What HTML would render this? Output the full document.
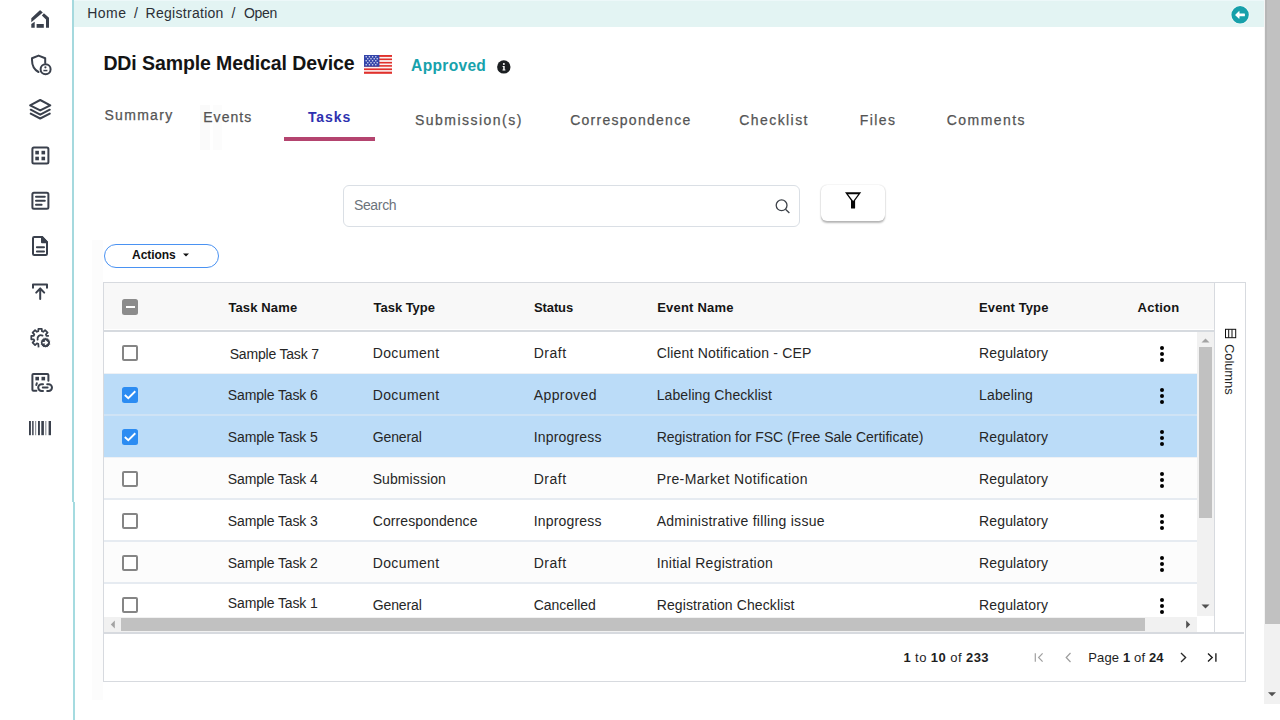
<!DOCTYPE html>
<html><head><meta charset="utf-8">
<style>
html,body{margin:0;padding:0;}
body{width:1280px;height:720px;overflow:hidden;position:relative;background:#fff;font-family:"Liberation Sans",sans-serif;}
.a{position:absolute;}
.t{position:absolute;white-space:nowrap;}
.cb{position:absolute;left:122px;width:12px;height:12px;border:2px solid #858585;border-radius:2px;background:#fff;}
.cbc{position:absolute;left:122px;width:16px;height:16px;border-radius:2.5px;background:#2c8cf2;}
.row{position:absolute;left:104px;width:1093px;height:42px;}
.dots{position:absolute;left:1159.5px;width:4px;height:4px;border-radius:50%;background:#000;box-shadow:0 6px 0 #000,0 12px 0 #000;}
</style></head>
<body>
<!-- sidebar -->
<div class="a" style="left:72px;top:0;width:2px;height:502px;background:#a5d9de"></div><div class="a" style="left:73px;top:502px;width:1.6px;height:218px;background:#a5dbe0"></div>
<div class="a" style="left:92px;top:240px;width:11px;height:460px;background:#fcfcfc"></div>
<svg class="a" style="left:0;top:0" width="72" height="460" viewBox="0 0 72 460" fill="none" stroke="#3a404c" stroke-width="2" stroke-linecap="round" stroke-linejoin="round">
  <!-- home -->
  <g fill="#3a404c" stroke="none">
    <path d="M31.3 18.3 L39.6 10.6 Q40.1 10.1 40.6 10.6 L42.8 12.5 L31.3 22.2 Z"/>
    <path d="M43.9 13.3 L49 17.7 L49 27.7 L46 27.7 L46 19.5 L41.9 15.5 Z"/>
    <path d="M31.3 24.1 L34.7 21.7 L34.7 27.7 L31.3 27.7 Z"/>
    <rect x="36.6" y="24" width="7.2" height="3.8"/>
  </g>
  <!-- shield -->
  <path d="M38.5 72 C33 69 32 65 32 60 L32 58.2 L38.6 55.6 L45.2 58.2 L45.2 63"/>
  <circle cx="45.6" cy="69.2" r="5" />
  <g fill="#3a404c" stroke="none"><circle cx="45.4" cy="67.3" r="1.1"/><rect x="43.4" y="69.8" width="4" height="1.5"/></g>
  <!-- layers -->
  <path d="M40.2 100 L50.3 105.3 L40.2 110.4 L30.1 105.3 Z"/>
  <path d="M30.7 109.7 L40.2 114.7 L49.8 109.7"/>
  <path d="M30.7 113.6 L40.2 118.5 L49.8 113.6"/>
  <!-- grid -->
  <rect x="32.4" y="147.4" width="16" height="16" rx="1.5"/>
  <g fill="#3a404c" stroke="none"><rect x="35.3" y="150.8" width="3.6" height="3.6"/><rect x="41.5" y="150.8" width="3.6" height="3.6"/><rect x="35.3" y="156.7" width="3.6" height="3.6"/><rect x="41.5" y="156.7" width="3.6" height="3.6"/></g>
  <!-- doc lines -->
  <rect x="32.4" y="192.7" width="16" height="16" rx="1.5"/>
  <path d="M36 196.7 H44.8 M36 200.7 H44.8 M36 204.7 H41.6"/>
  <!-- file -->
  <path d="M34.2 237 H42 L47 242.3 V253.8 Q47 255 45.8 255 H34.2 Q33 255 33 253.8 V238.2 Q33 237 34.2 237 Z"/>
  <path d="M42 237 V242.3 H47 Z" fill="#3a404c"/>
  <path d="M36.9 247.2 H44 M36.9 251.4 H44"/>
  <!-- upload -->
  <path d="M33 287.7 V284.6 H47 V287.7"/>
  <path d="M40.2 299 V288.5 M36.2 292.6 L40.2 288.5 L44.2 292.6"/>
  <!-- gear -->
  <path d="M38.6 347.3 L38.3 343.9 L36.9 343.4 L35.1 345.1 L32.6 342.6 L34.3 340.8 L33.8 339.4 L31.3 339.3 L31.3 335.9 L33.8 335.8 L34.3 334.4 L32.6 332.6 L35.1 330.1 L36.9 331.8 L38.3 331.3 L38.4 328.8 L41.8 328.8 L41.9 331.3 L43.3 331.8 L45.1 330.1 L47.6 332.6 L45.9 334.4 L46.4 335.8 L48.9 335.9" stroke-width="1.75" stroke-linecap="butt"/>
  <path d="M37.6 339.6 A3.4 3.4 0 0 1 42.5 335.6" stroke-width="1.9"/>
  <circle cx="45.5" cy="342.7" r="5.1" fill="#3a404c" stroke="#fff" stroke-width="1"/>
  <path d="M42.6 342.7 H46.6 M45 340.6 L47.4 342.7 L45 344.8" stroke="#fff" stroke-width="1.5" stroke-linecap="butt"/>
  <!-- calendar link -->
  <path d="M36.4 390.8 H33.5 Q32.4 390.8 32.4 389.7 V375 Q32.4 373.9 33.5 373.9 H47.3 Q48.4 373.9 48.4 375 V380.8"/>
  <path d="M36.8 383.3 L36.3 385"/>
  <g fill="#3a404c" stroke="none"><rect x="35.4" y="376.8" width="3.6" height="3.6"/><rect x="41.5" y="376.8" width="3.6" height="3.6"/></g>
  <path d="M43 391 H41.6 A3.4 3.4 0 0 1 41.6 384.2 H43 M47.2 384.2 H48.6 A3.4 3.4 0 0 1 48.6 391 H47.2 M42.8 387.6 H47.6"/>
  <!-- barcode -->
  <g fill="#3a404c" stroke="none">
    <rect x="29" y="421" width="1.9" height="14.2"/>
    <rect x="32" y="421" width="1.7" height="14.2" opacity="0.85"/>
    <rect x="35" y="421" width="1.2" height="14.2" opacity="0.55"/>
    <rect x="38" y="421" width="1.9" height="14.2"/>
    <rect x="41.3" y="421" width="2.6" height="14.2"/>
    <rect x="45" y="421" width="1.5" height="14.2" opacity="0.45"/>
    <rect x="48.6" y="421" width="2.4" height="14.2"/>
  </g>
</svg>

<!-- breadcrumb bar -->
<div class="a" style="left:74px;top:0;width:1190px;height:27px;background:#e3f4f3"></div>
<div class="a" style="left:74px;top:0;width:1190px;height:1px;background:#edf8f9"></div>
<svg class="a" style="left:1230px;top:5px" width="20" height="20" viewBox="0 0 20 20">
  <circle cx="10.1" cy="9.8" r="9.4" fill="#fff" opacity="0.8"/>
  <circle cx="10.1" cy="9.8" r="8.7" fill="#17a0aa"/>
  <path d="M5 9.9 L9.3 5.8 L9.6 8.6 L14.4 8.6 Q14.9 8.6 14.9 9.1 L14.9 10.7 Q14.9 11.2 14.4 11.2 L9.6 11.2 L9.3 14 Z" fill="#fff"/>
</svg>

<!-- flag -->
<svg class="a" style="left:364px;top:55px" width="28" height="19" viewBox="0 0 28 19">
  <rect width="28" height="19" fill="#fbf3f3"/>
  <g fill="#e0312c"><rect y="0" width="28" height="1.9"/><rect y="3.5" width="28" height="1.6"/><rect y="6.9" width="28" height="1.6"/><rect y="10.1" width="28" height="1.6"/><rect y="13.4" width="28" height="1.7"/><rect y="16.7" width="28" height="2.1"/></g>
  <rect width="15.4" height="11.7" fill="#3344aa"/>
  <g fill="#d6daf0"><circle cx="2.2" cy="1.8" r="0.8"/><circle cx="5.4" cy="1.8" r="0.8"/><circle cx="8.6" cy="1.8" r="0.8"/><circle cx="11.8" cy="1.8" r="0.8"/><circle cx="3.8" cy="3.8" r="0.8"/><circle cx="7.0" cy="3.8" r="0.8"/><circle cx="10.2" cy="3.8" r="0.8"/><circle cx="13.2" cy="3.8" r="0.8"/><circle cx="2.2" cy="5.8" r="0.8"/><circle cx="5.4" cy="5.8" r="0.8"/><circle cx="8.6" cy="5.8" r="0.8"/><circle cx="11.8" cy="5.8" r="0.8"/><circle cx="3.8" cy="7.8" r="0.8"/><circle cx="7.0" cy="7.8" r="0.8"/><circle cx="10.2" cy="7.8" r="0.8"/><circle cx="13.2" cy="7.8" r="0.8"/><circle cx="2.2" cy="9.8" r="0.8"/><circle cx="5.4" cy="9.8" r="0.8"/><circle cx="8.6" cy="9.8" r="0.8"/><circle cx="11.8" cy="9.8" r="0.8"/></g>
</svg>
<!-- info icon -->
<svg class="a" style="left:496px;top:59px" width="16" height="16" viewBox="0 0 16 16">
  <circle cx="7.8" cy="7.9" r="6.7" fill="#1c1f22"/>
  <circle cx="7.9" cy="5" r="1" fill="#fff"/>
  <path d="M6.6 7 H8.7 V10.6 H9.4 V11.6 H6.5 V10.6 H7.2 V8 H6.6 Z" fill="#fff"/>
</svg>

<!-- tabs underline -->
<div class="a" style="left:284px;top:137px;width:91px;height:4px;background:#b4446f"></div>
<!-- faint ghost near events -->
<div class="a" style="left:200px;top:105px;width:10px;height:45px;background:#fafafa"></div><div class="a" style="left:213px;top:105px;width:9px;height:45px;background:#fcfcfc"></div>

<!-- search -->
<div class="a" style="left:343px;top:185px;width:455px;height:40px;border:1px solid #dadfe5;border-radius:6px;background:#fff"></div>
<svg class="a" style="left:772px;top:196px" width="20" height="20" viewBox="0 0 20 20" fill="none" stroke="#3d4249" stroke-width="1.3">
  <circle cx="9.6" cy="9.3" r="5.4"/>
  <path d="M13.5 13.2 L17.4 17"/>
</svg>
<!-- filter button -->
<div class="a" style="left:821px;top:185px;width:64px;height:35.5px;border-radius:6px;background:#fff;box-shadow:0 1.5px 2px rgba(0,0,0,0.28),0 0 1.5px rgba(0,0,0,0.12)"></div>
<svg class="a" style="left:843px;top:190px" width="20" height="22" viewBox="0 0 20 22">
  <path d="M2 2.2 H18.2 L12.1 10.5 V18 Q12.1 18.5 11.6 18.5 H8.5 Q8 18.5 8 18 V10.5 Z M5 4.2 L10.2 11.1 L15.2 4.2 Z" fill="#050505" fill-rule="evenodd"/>
</svg>

<!-- actions button -->
<div class="a" style="left:103.5px;top:243.5px;width:113px;height:22.5px;border:1.3px solid #4a92f2;border-radius:13px;background:#fff"></div>
<svg class="a" style="left:182px;top:252px" width="8" height="6" viewBox="0 0 8 6"><path d="M1 1.5 H7 L4 4.5 Z" fill="#111"/></svg>

<!-- table -->
<div class="a" style="left:103px;top:282px;width:1141px;height:398px;border:1px solid #d7dadf;background:#fff"></div>
<div class="a" style="left:104px;top:283px;width:1110px;height:46px;background:#f8f8f8"></div>
<div class="a" style="left:104px;top:330px;width:1110px;height:2px;background:#d6dadf"></div>
<!-- rows -->
<div class="row" style="top:332px;height:41px;background:#fff"></div>
<div class="row" style="top:373px;height:42px;background:#bbdcf8"></div>
<div class="row" style="top:415px;height:42px;background:#bbdcf8"></div>
<div class="row" style="top:457px;height:42px;background:#fcfcfc"></div>
<div class="row" style="top:499px;height:42px;background:#fff"></div>
<div class="row" style="top:541px;height:42px;background:#fcfcfc"></div>
<div class="row" style="top:583px;height:34px;background:#fff"></div>
<div class="a" style="left:104px;top:414px;width:1093px;height:1.5px;background:#cfe3f5"></div>
<div class="a" style="left:104px;top:498px;width:1093px;height:1.5px;background:#e6ebf1"></div>
<div class="a" style="left:104px;top:540px;width:1093px;height:1.5px;background:#e6ebf1"></div>
<div class="a" style="left:104px;top:582px;width:1093px;height:1.5px;background:#e6ebf1"></div>
<div class="a" style="left:104px;top:456.5px;width:1093px;height:1px;background:#eef1f5"></div>
<div class="a" style="left:104px;top:372.5px;width:1093px;height:1px;background:#eef1f5"></div>

<!-- checkboxes -->
<div class="cbc" style="top:298.5px;background:#8c8c8c;border-radius:2.5px"></div>
<div class="a" style="left:125.5px;top:305.5px;width:9px;height:2px;background:#fff"></div>
<div class="cb" style="top:344.5px"></div>
<div class="cbc" style="top:386.5px"></div>
<svg class="a" style="left:122px;top:386.5px" width="16" height="16" viewBox="0 0 16 16"><path d="M2.8 8 L6.3 11.2 L13.3 4.3" fill="none" stroke="#fff" stroke-width="1.9"/></svg>
<div class="cbc" style="top:428.5px"></div>
<svg class="a" style="left:122px;top:428.5px" width="16" height="16" viewBox="0 0 16 16"><path d="M2.8 8 L6.3 11.2 L13.3 4.3" fill="none" stroke="#fff" stroke-width="1.9"/></svg>
<div class="cb" style="top:470.5px"></div>
<div class="cb" style="top:512.5px"></div>
<div class="cb" style="top:554.5px"></div>
<div class="cb" style="top:596.5px"></div>

<!-- dots -->
<div class="dots" style="top:345.8px"></div>
<div class="dots" style="top:387.8px"></div>
<div class="dots" style="top:429.8px"></div>
<div class="dots" style="top:471.8px"></div>
<div class="dots" style="top:513.8px"></div>
<div class="dots" style="top:555.8px"></div>
<div class="dots" style="top:597.8px"></div>

<!-- vertical scrollbar -->
<div class="a" style="left:1197px;top:332px;width:17px;height:284px;background:#f1f1f1"></div>
<div class="a" style="left:1199px;top:347px;width:13px;height:171px;background:#c1c1c1"></div>
<svg class="a" style="left:1197px;top:332px" width="17" height="16" viewBox="0 0 17 16"><path d="M4.5 10.5 H12.5 L8.5 6.5 Z" fill="#a3a3a3"/></svg>
<svg class="a" style="left:1197px;top:599px" width="17" height="16" viewBox="0 0 17 16"><path d="M4.5 5.5 H12.5 L8.5 9.5 Z" fill="#505050"/></svg>
<!-- horizontal scrollbar -->
<div class="a" style="left:104px;top:617px;width:1093px;height:15px;background:#f1f1f1"></div>
<div class="a" style="left:121px;top:618px;width:1024px;height:13px;background:#c1c1c1"></div>
<svg class="a" style="left:104px;top:617px" width="17" height="15" viewBox="0 0 17 15"><path d="M10.8 3.5 V11.5 L6.8 7.5 Z" fill="#a3a3a3"/></svg>
<svg class="a" style="left:1180px;top:617px" width="17" height="15" viewBox="0 0 17 15"><path d="M6.2 3.5 V11.5 L10.2 7.5 Z" fill="#505050"/></svg>
<div class="a" style="left:104px;top:632px;width:1140px;height:1.5px;background:#d7dadf"></div>
<!-- columns panel -->
<div class="a" style="left:1213.5px;top:283px;width:1.5px;height:350px;background:#d7dadf"></div>
<svg class="a" style="left:1224px;top:328px" width="13" height="11" viewBox="0 0 13 11" fill="none" stroke="#111" stroke-width="1">
  <rect x="1.5" y="1.3" width="10.2" height="8.4"/>
  <path d="M4.7 1.3 V9.7 M8 1.3 V9.7"/>
</svg>
<div class="t" style="left:1204px;top:361px;width:50px;height:16px;font-size:13px;line-height:16px;color:#262626;transform:rotate(90deg);transform-origin:25px 8px;letter-spacing:-0.1px">Columns</div>

<!-- pagination icons -->
<svg class="a" style="left:1030px;top:648px" width="200" height="20" viewBox="0 0 200 20" fill="none" stroke-width="1.3">
  <path d="M5.3 5.3 V13.7 M12.6 5.3 L8.6 9.5 L12.6 13.7" stroke="#a0a0a0" stroke-width="1.2"/>
  <path d="M40.5 5 L36.2 9.5 L40.5 14" stroke="#9d9d9d" stroke-width="1.2"/>
  <path d="M151 5 L155.6 9.5 L151 14" stroke="#2a2a2a" stroke-width="1.35"/>
  <path d="M178 5.6 L182.2 9.5 L178 13.4 M185.9 5.3 V13.7" stroke="#1a1a1a" stroke-width="1.35"/>
</svg>

<!-- page scrollbar -->
<div class="a" style="left:1265px;top:0;width:15px;height:720px;background:#fff"></div>
<div class="a" style="left:1265px;top:0;width:15px;height:624px;background:#c1c1c1"></div><div class="a" style="left:1265px;top:0;width:1.5px;height:240px;background:#b7b7b7"></div><div class="a" style="left:1264px;top:0;width:1px;height:624px;background:#f4f4f4"></div>
<div class="a" style="left:1264px;top:624px;width:16px;height:80px;background:#f1f1f1"></div>
<svg class="a" style="left:1264px;top:686px" width="16" height="16" viewBox="0 0 16 16"><path d="M4 6.2 H12 L8 10.2 Z" fill="#505050"/></svg>

<div class=t style="left:87.2px;top:3.9px;font-size:14px;line-height:18px;font-weight:400;color:#2b2f36;letter-spacing:0.51px;">Home</div>
<div class=t style="left:133.9px;top:3.9px;font-size:14px;line-height:18px;font-weight:400;color:#2b2f36;letter-spacing:0.00px;">/</div>
<div class=t style="left:145.6px;top:3.9px;font-size:14px;line-height:18px;font-weight:400;color:#2b2f36;letter-spacing:0.28px;">Registration</div>
<div class=t style="left:231.4px;top:3.9px;font-size:14px;line-height:18px;font-weight:400;color:#2b2f36;letter-spacing:0.00px;">/</div>
<div class=t style="left:243.9px;top:3.9px;font-size:14px;line-height:18px;font-weight:400;color:#2b2f36;letter-spacing:-0.32px;">Open</div>
<div class=t style="left:103.4px;top:51.3px;font-size:19.5px;line-height:25px;font-weight:700;color:#141414;letter-spacing:-0.10px;">DDi Sample Medical Device</div>
<div class=t style="left:411.1px;top:55.6px;font-size:15.6px;line-height:20px;font-weight:700;color:#17a2ac;letter-spacing:0.29px;">Approved</div>
<div class=t style="left:104.4px;top:105.9px;font-size:14px;line-height:18px;font-weight:400;color:#545454;letter-spacing:1.32px;-webkit-text-stroke:0.25px #545454">Summary</div>
<div class=t style="left:203.2px;top:108.4px;font-size:14px;line-height:18px;font-weight:400;color:#545454;letter-spacing:1.06px;-webkit-text-stroke:0.25px #545454">Events</div>
<div class=t style="left:307.9px;top:108.4px;font-size:14px;line-height:18px;font-weight:700;color:#2e31b0;letter-spacing:0.96px;">Tasks</div>
<div class=t style="left:415.0px;top:110.9px;font-size:14px;line-height:18px;font-weight:400;color:#545454;letter-spacing:1.47px;-webkit-text-stroke:0.25px #545454">Submission(s)</div>
<div class=t style="left:570.2px;top:110.6px;font-size:14px;line-height:18px;font-weight:400;color:#545454;letter-spacing:1.27px;-webkit-text-stroke:0.25px #545454">Correspondence</div>
<div class=t style="left:739.2px;top:110.6px;font-size:14px;line-height:18px;font-weight:400;color:#545454;letter-spacing:1.44px;-webkit-text-stroke:0.25px #545454">Checklist</div>
<div class=t style="left:859.7px;top:110.6px;font-size:14px;line-height:18px;font-weight:400;color:#545454;letter-spacing:1.41px;-webkit-text-stroke:0.25px #545454">Files</div>
<div class=t style="left:946.7px;top:110.6px;font-size:14px;line-height:18px;font-weight:400;color:#545454;letter-spacing:1.46px;-webkit-text-stroke:0.25px #545454">Comments</div>
<div class=t style="left:353.9px;top:196.0px;font-size:14px;line-height:18px;font-weight:400;color:#6c737b;letter-spacing:-0.33px;">Search</div>
<div class=t style="left:132.1px;top:246.7px;font-size:12px;line-height:16px;font-weight:700;color:#111;letter-spacing:-0.09px;">Actions</div>
<div class=t style="left:228.4px;top:299.1px;font-size:13px;line-height:17px;font-weight:700;color:#151515;letter-spacing:0.13px;">Task Name</div>
<div class=t style="left:373.6px;top:299.1px;font-size:13px;line-height:17px;font-weight:700;color:#151515;letter-spacing:-0.04px;">Task Type</div>
<div class=t style="left:534.0px;top:299.1px;font-size:13px;line-height:17px;font-weight:700;color:#151515;letter-spacing:-0.11px;">Status</div>
<div class=t style="left:657.2px;top:299.1px;font-size:13px;line-height:17px;font-weight:700;color:#151515;letter-spacing:0.20px;">Event Name</div>
<div class=t style="left:979.1px;top:299.1px;font-size:13px;line-height:17px;font-weight:700;color:#151515;letter-spacing:0.10px;">Event Type</div>
<div class=t style="left:1137.6px;top:299.1px;font-size:13px;line-height:17px;font-weight:700;color:#151515;letter-spacing:0.23px;">Action</div>
<div class=t style="left:229.7px;top:344.5px;font-size:14px;line-height:18px;font-weight:400;color:#262626;letter-spacing:-0.19px;">Sample Task 7</div>
<div class=t style="left:372.7px;top:343.9px;font-size:14px;line-height:18px;font-weight:400;color:#262626;letter-spacing:0.38px;">Document</div>
<div class=t style="left:533.7px;top:343.9px;font-size:14px;line-height:18px;font-weight:400;color:#262626;letter-spacing:0.54px;">Draft</div>
<div class=t style="left:656.7px;top:343.9px;font-size:14px;line-height:18px;font-weight:400;color:#262626;letter-spacing:0.19px;">Client Notification - CEP</div>
<div class=t style="left:979.1px;top:343.9px;font-size:14px;line-height:18px;font-weight:400;color:#262626;letter-spacing:0.13px;">Regulatory</div>
<div class=t style="left:227.8px;top:385.9px;font-size:14px;line-height:18px;font-weight:400;color:#262626;letter-spacing:-0.14px;">Sample Task 6</div>
<div class=t style="left:372.7px;top:385.9px;font-size:14px;line-height:18px;font-weight:400;color:#262626;letter-spacing:0.38px;">Document</div>
<div class=t style="left:533.7px;top:385.9px;font-size:14px;line-height:18px;font-weight:400;color:#262626;letter-spacing:0.41px;">Approved</div>
<div class=t style="left:656.7px;top:385.9px;font-size:14px;line-height:18px;font-weight:400;color:#262626;letter-spacing:0.09px;">Labeling Checklist</div>
<div class=t style="left:979.1px;top:385.9px;font-size:14px;line-height:18px;font-weight:400;color:#262626;letter-spacing:0.12px;">Labeling</div>
<div class=t style="left:227.8px;top:427.9px;font-size:14px;line-height:18px;font-weight:400;color:#262626;letter-spacing:-0.14px;">Sample Task 5</div>
<div class=t style="left:372.7px;top:427.9px;font-size:14px;line-height:18px;font-weight:400;color:#262626;letter-spacing:-0.10px;">General</div>
<div class=t style="left:533.7px;top:427.9px;font-size:14px;line-height:18px;font-weight:400;color:#262626;letter-spacing:0.18px;">Inprogress</div>
<div class=t style="left:656.7px;top:427.9px;font-size:14px;line-height:18px;font-weight:400;color:#262626;letter-spacing:-0.02px;">Registration for FSC (Free Sale Certificate)</div>
<div class=t style="left:979.1px;top:427.9px;font-size:14px;line-height:18px;font-weight:400;color:#262626;letter-spacing:0.13px;">Regulatory</div>
<div class=t style="left:227.8px;top:469.9px;font-size:14px;line-height:18px;font-weight:400;color:#262626;letter-spacing:-0.14px;">Sample Task 4</div>
<div class=t style="left:372.7px;top:469.9px;font-size:14px;line-height:18px;font-weight:400;color:#262626;letter-spacing:0.09px;">Submission</div>
<div class=t style="left:533.7px;top:469.9px;font-size:14px;line-height:18px;font-weight:400;color:#262626;letter-spacing:0.54px;">Draft</div>
<div class=t style="left:656.7px;top:469.9px;font-size:14px;line-height:18px;font-weight:400;color:#262626;letter-spacing:0.38px;">Pre-Market Notification</div>
<div class=t style="left:979.1px;top:469.9px;font-size:14px;line-height:18px;font-weight:400;color:#262626;letter-spacing:0.13px;">Regulatory</div>
<div class=t style="left:227.8px;top:511.9px;font-size:14px;line-height:18px;font-weight:400;color:#262626;letter-spacing:-0.14px;">Sample Task 3</div>
<div class=t style="left:372.7px;top:511.9px;font-size:14px;line-height:18px;font-weight:400;color:#262626;letter-spacing:0.10px;">Correspondence</div>
<div class=t style="left:533.7px;top:511.9px;font-size:14px;line-height:18px;font-weight:400;color:#262626;letter-spacing:0.18px;">Inprogress</div>
<div class=t style="left:656.7px;top:511.9px;font-size:14px;line-height:18px;font-weight:400;color:#262626;letter-spacing:0.28px;">Administrative filling issue</div>
<div class=t style="left:979.1px;top:511.9px;font-size:14px;line-height:18px;font-weight:400;color:#262626;letter-spacing:0.13px;">Regulatory</div>
<div class=t style="left:227.8px;top:553.9px;font-size:14px;line-height:18px;font-weight:400;color:#262626;letter-spacing:-0.14px;">Sample Task 2</div>
<div class=t style="left:372.7px;top:553.9px;font-size:14px;line-height:18px;font-weight:400;color:#262626;letter-spacing:0.38px;">Document</div>
<div class=t style="left:533.7px;top:553.9px;font-size:14px;line-height:18px;font-weight:400;color:#262626;letter-spacing:0.54px;">Draft</div>
<div class=t style="left:656.7px;top:553.9px;font-size:14px;line-height:18px;font-weight:400;color:#262626;letter-spacing:0.25px;">Initial Registration</div>
<div class=t style="left:979.1px;top:553.9px;font-size:14px;line-height:18px;font-weight:400;color:#262626;letter-spacing:0.13px;">Regulatory</div>
<div class=t style="left:227.8px;top:593.6px;font-size:14px;line-height:18px;font-weight:400;color:#262626;letter-spacing:-0.14px;">Sample Task 1</div>
<div class=t style="left:372.7px;top:595.9px;font-size:14px;line-height:18px;font-weight:400;color:#262626;letter-spacing:-0.10px;">General</div>
<div class=t style="left:533.7px;top:595.9px;font-size:14px;line-height:18px;font-weight:400;color:#262626;letter-spacing:-0.02px;">Cancelled</div>
<div class=t style="left:656.7px;top:595.9px;font-size:14px;line-height:18px;font-weight:400;color:#262626;letter-spacing:0.11px;">Registration Checklist</div>
<div class=t style="left:979.1px;top:595.9px;font-size:14px;line-height:18px;font-weight:400;color:#262626;letter-spacing:0.13px;">Regulatory</div>
<div class=t style="left:903.4px;top:649.0px;font-size:13px;line-height:17px;font-weight:400;color:#1e1e1e;letter-spacing:0.43px;"><b>1</b> to <b>10</b> of <b>233</b></div>
<div class=t style="left:1088.3px;top:649.0px;font-size:13px;line-height:17px;font-weight:400;color:#1e1e1e;letter-spacing:0.14px;">Page <b>1</b> of <b>24</b></div>
</body></html>
